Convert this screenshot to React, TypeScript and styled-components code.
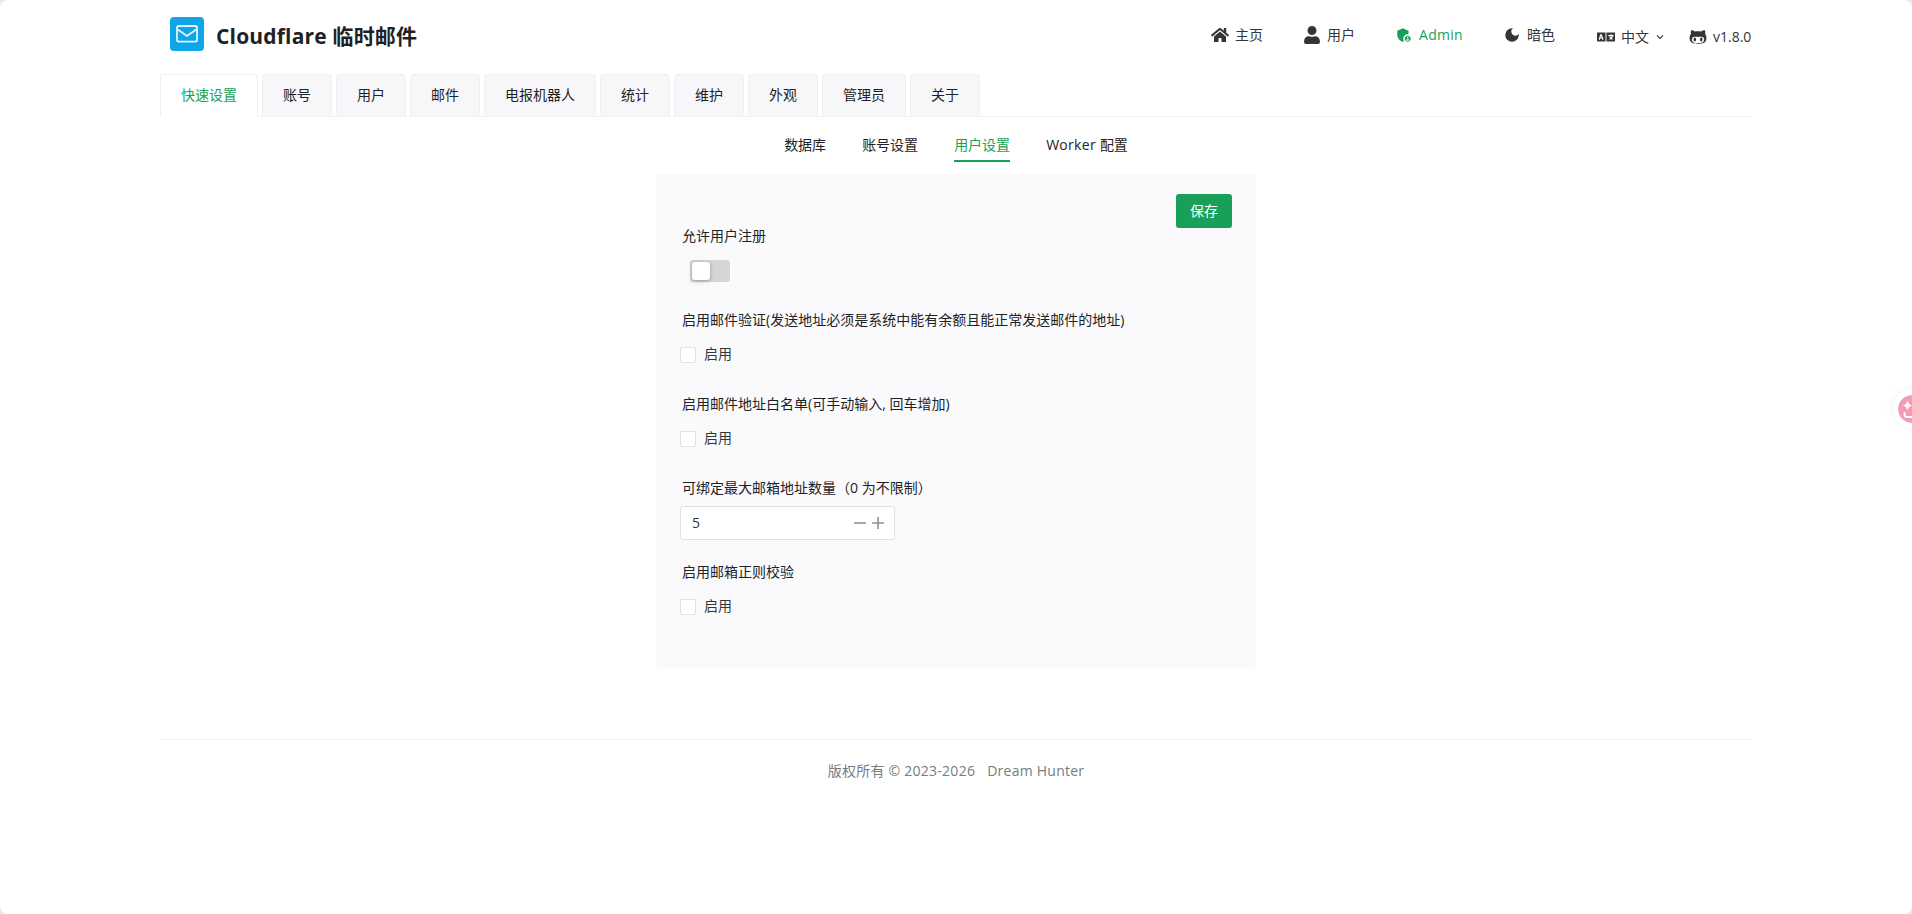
import React, { useState } from "react";
import styled, { createGlobalStyle, css } from "styled-components";
import { FaHome, FaUser, FaLanguage, FaGithubAlt } from "react-icons/fa";
import { MdAdminPanelSettings, MdDarkMode } from "react-icons/md";

const GlobalStyle = createGlobalStyle`
  *, *::before, *::after { box-sizing: border-box; }
  html { background: #e9e9e9; }
  body { margin: 0; overflow: hidden; }
  button, input { font: inherit; color: inherit; }
`;

const Page = styled.div`
  position: relative;
  height: 914px;
  padding: 0 160px;
  overflow: hidden;
  background: #fff;
  border-radius: 8px;
  color: #333639;
  font: 14px/22px "Open Sans", "Noto Sans CJK SC", sans-serif;
`;

const Header = styled.header`
  display: flex;
  justify-content: space-between;
  height: 74px;
  padding-left: 10px;
`;

const Brand = styled.div`
  display: flex;
  height: 34px;
  margin-top: 17px;
  gap: 12px;
`;

const Logo = styled.span`
  display: grid;
  place-items: center;
  width: 34px;
  height: 34px;
  border-radius: 4px;
  background: #0ea5e9;
`;

const Title = styled.h3`
  margin: 2px 0 0;
  font-size: 21px;
  line-height: 34px;
  font-weight: 700;
  color: #1f2225;
  letter-spacing: 0.18px;
  white-space: nowrap;
`;

const Nav = styled.nav`
  display: flex;
  align-items: flex-start;
  padding-top: 24px;
`;

const NavItem = styled.a<{ $width: number; $active?: boolean; $drop?: number; $gap?: number }>`
  display: flex;
  align-items: center;
  width: ${(p) => p.$width}px;
  height: 22px;
  gap: ${(p) => p.$gap ?? 6}px;
  margin-top: ${(p) => p.$drop ?? 0}px;
  color: ${(p) => (p.$active ? "#18a058" : "#333639")};
  white-space: nowrap;
  svg { flex: none; }
`;

const Tabs = styled.div`
  display: flex;
  gap: 4px;
  height: 43px;
  box-shadow: inset 0 -1px #efeff5;
`;

const Tab = styled.button<{ $active: boolean }>`
  height: 43px;
  padding: 0 20px 2px;
  border: 1px solid #efeff5;
  border-radius: 3px 3px 0 0;
  background: #f7f7fa;
  color: #1f2225;
  white-space: nowrap;
  ${(p) =>
    p.$active &&
    css`
      background: #fff;
      border-bottom-color: #fff;
      color: #18a058;
    `}
`;

const SubTabs = styled.div`
  display: flex;
  justify-content: center;
  gap: 36px;
  height: 45px;
  margin-bottom: 12px;
`;

const SubTab = styled.button<{ $active: boolean }>`
  height: 45px;
  padding: 12px 0 0;
  border: 0;
  border-bottom: 2px solid ${(p) => (p.$active ? "#18a058" : "transparent")};
  background: none;
  color: ${(p) => (p.$active ? "#18a058" : "#1f2225")};
`;

const Latin = styled.span`
  letter-spacing: 0.3px;
`;

const Card = styled.main`
  width: 600px;
  height: 494px;
  margin: 0 auto;
  padding: 20px 24px;
  border-radius: 3px;
  background: #fafafc;
`;

const Actions = styled.div`
  display: flex;
  justify-content: flex-end;
  height: 29px;
`;

const SaveButton = styled.button`
  width: 56px;
  height: 34px;
  padding: 0 0 1px;
  border: 0;
  border-radius: 3px;
  background: #18a058;
  color: #fff;
`;

const Field = styled.section`
  height: 84px;
`;

const Label = styled.div`
  height: 31px;
  padding: 2px 0 0 2px;
  color: #1f2225;
  white-space: nowrap;
`;

const Control = styled.div`
  display: flex;
  align-items: center;
  height: 32px;
`;

const Rail = styled.button<{ $on: boolean }>`
  width: 40px;
  height: 22px;
  margin: 6px 0 0 10px;
  padding: 2px;
  border: 0;
  border-radius: 3px;
  display: flex;
  justify-content: ${(p) => (p.$on ? "flex-end" : "flex-start")};
  background: ${(p) => (p.$on ? "#18a058" : "#d6d6d6")};
`;

const Knob = styled.span`
  width: 18px;
  height: 18px;
  border-radius: 3px;
  background: #fff;
  box-shadow: 0 1px 4px rgba(0, 0, 0, 0.3), inset 0 0 1px rgba(0, 0, 0, 0.05);
`;

const Check = styled.label`
  display: flex;
  align-items: center;
  gap: 8px;
`;

const Box = styled.input`
  appearance: none;
  width: 16px;
  height: 16px;
  margin: 2px 0 0;
  border: 1px solid #e0e0e6;
  border-radius: 2px;
  background: #fff;
  &:checked { background: #18a058; border-color: #18a058; }
`;

const NumberBox = styled.div`
  display: flex;
  align-items: center;
  width: 215px;
  height: 34px;
  padding: 0 7px 0 11px;
  border: 1px solid #e0e0e6;
  border-radius: 3px;
  background: #fff;
`;

const Value = styled.span`
  flex: 1;
`;

const Step = styled.button`
  display: grid;
  place-items: center;
  width: 18px;
  height: 18px;
  padding: 0;
  border: 0;
  background: none;
`;

const Footer = styled.footer`
  display: flex;
  justify-content: center;
  gap: 12px;
  margin-top: 71px;
  padding-top: 20px;
  border-top: 1px solid #efeff5;
  color: #767c82;
  letter-spacing: 0.25px;
`;

const Assistant = styled.span`
  position: absolute;
  top: 390px;
  right: -19px;
  display: grid;
  place-items: center;
  width: 38px;
  height: 38px;
  border: 5px solid #fff;
  border-radius: 50%;
  background: #f19db5;
  background-clip: padding-box;
  box-shadow: 0 0 8px rgba(0, 0, 0, 0.06);
`;

const mainTabs = ["快速设置", "账号", "用户", "邮件", "电报机器人", "统计", "维护", "外观", "管理员", "关于"];
const subTabs = [
  { key: "db", label: "数据库" },
  { key: "account", label: "账号设置" },
  { key: "user", label: "用户设置" },
  { key: "worker", label: <><Latin>Worker </Latin>配置</> },
];

function EnableField({ label }: { label: string }) {
  return (
    <Field>
      <Label>{label}</Label>
      <Control>
        <Check>
          <Box type="checkbox" />
          启用
        </Check>
      </Control>
    </Field>
  );
}

export default function App() {
  const [tab, setTab] = useState(0);
  const [sub, setSub] = useState("user");
  const [open, setOpen] = useState(false);
  const [count, setCount] = useState(5);

  return (
    <Page>
      <GlobalStyle />
      <Header>
        <Brand>
          <Logo>
            <svg width="22" height="18" viewBox="0 0 22 18" fill="none" stroke="#e4f5fd" strokeWidth="1.8" strokeLinejoin="round">
              <rect x="1" y="1" width="20" height="15.6" rx="1.6" />
              <path d="M1.4 4.2 11 11l9.6-6.8" />
            </svg>
          </Logo>
          <Title>Cloudflare 临时邮件</Title>
        </Brand>
        <Nav>
          <NavItem $width={92}><FaHome size={18} />主页</NavItem>
          <NavItem $width={92} $gap={6}><FaUser size={18} />用户</NavItem>
          <NavItem $width={108} $active><MdAdminPanelSettings size={18} /><Latin>Admin</Latin></NavItem>
          <NavItem $width={94}><MdDarkMode size={18} />暗色</NavItem>
          <NavItem $width={92} $drop={2}>
            <FaLanguage size={18} />
            中文
            <svg width="10" height="10" viewBox="0 0 10 10" fill="none" stroke="#333639" strokeWidth="1.1">
              <path d="M2 3.4 5 6.5 8 3.4" />
            </svg>
          </NavItem>
          <NavItem $width={63} $drop={2}><FaGithubAlt size={18} />v1.8.0</NavItem>
        </Nav>
      </Header>
      <Tabs>
        {mainTabs.map((t, i) => (
          <Tab key={t} $active={i === tab} onClick={() => setTab(i)}>{t}</Tab>
        ))}
      </Tabs>
      <SubTabs>
        {subTabs.map((t) => (
          <SubTab key={t.key} $active={t.key === sub} onClick={() => setSub(t.key)}>{t.label}</SubTab>
        ))}
      </SubTabs>
      <Card>
        <Actions><SaveButton>保存</SaveButton></Actions>
        <Field>
          <Label>允许用户注册</Label>
          <Rail $on={open} onClick={() => setOpen(!open)}><Knob /></Rail>
        </Field>
        <EnableField label="启用邮件验证(发送地址必须是系统中能有余额且能正常发送邮件的地址)" />
        <EnableField label="启用邮件地址白名单(可手动输入, 回车增加)" />
        <Field>
          <Label>可绑定最大邮箱地址数量（0 为不限制）</Label>
          <NumberBox>
            <Value>{count}</Value>
            <Step onClick={() => setCount(Math.max(0, count - 1))}>
              <svg width="12" height="12" viewBox="0 0 12 12" stroke="#8f9194" strokeWidth="1.6"><path d="M0 6h12" /></svg>
            </Step>
            <Step onClick={() => setCount(count + 1)}>
              <svg width="12" height="12" viewBox="0 0 12 12" stroke="#8f9194" strokeWidth="1.6"><path d="M0 6h12M6 0v12" /></svg>
            </Step>
          </NumberBox>
        </Field>
        <EnableField label="启用邮箱正则校验" />
      </Card>
      <Footer>
        <span>版权所有 © 2023-2026</span>
        <span>Dream Hunter</span>
      </Footer>
      <Assistant>
        <svg width="28" height="28" viewBox="0 0 28 28">
          <path d="M9.500 5.500q.8 4.200 5 5-4.200.8-5 5-.8-4.200-5-5 4.200-.8 5-5Z" fill="#fff" />
          <path d="M6.500 17v2.500q0 2.500 2.500 2.500h10q2.500 0 2.500-2.500V17" fill="none" stroke="#fff" strokeWidth="1.8" />
        </svg>
      </Assistant>
    </Page>
  );
}
